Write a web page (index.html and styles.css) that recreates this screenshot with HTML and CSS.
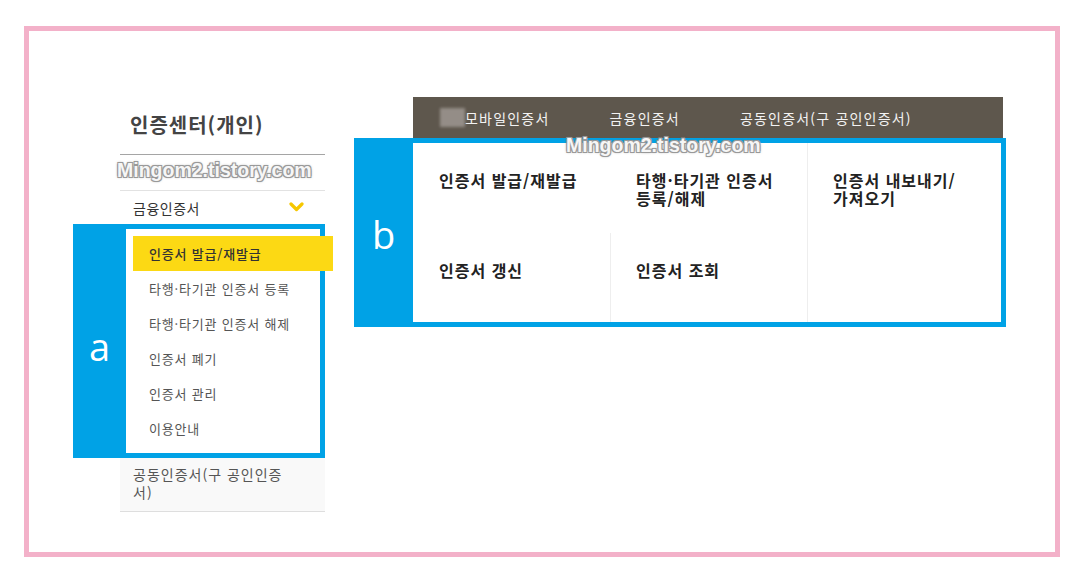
FILE: index.html
```html
<!DOCTYPE html>
<html lang="ko">

<head>
    <meta charset="UTF-8">
    <meta name="viewport" content="width=device-width, initial-scale=1.0">
    <title>인증센터(개인)</title>
    <link rel="stylesheet" href="styles.css">
</head>

<body>
    <div class="frame">
        <div class="side">
            <div class="side-title">인증센터(개인)</div>
            <div class="side-blank"></div>
            <div class="side-menu">
                <span>금융인증서</span>
                <svg class="chevron" width="15" height="10" viewBox="0 0 15 10">
                    <polyline points="2,2 7.5,7.5 13,2" fill="none" stroke="#f6c700" stroke-width="3.2" stroke-linecap="round" stroke-linejoin="round" />
                </svg>
            </div>
            <div class="annot annot-a">
                <div class="label label-a">a</div>
                <div class="sub">
                    <div class="sub-item active">인증서 발급/재발급</div>
                    <div class="sub-item">타행·타기관 인증서 등록</div>
                    <div class="sub-item">타행·타기관 인증서 해제</div>
                    <div class="sub-item">인증서 폐기</div>
                    <div class="sub-item">인증서 관리</div>
                    <div class="sub-item">이용안내</div>
                </div>
            </div>
            <div class="side-bottom">공동인증서(구 공인인증<br>서)</div>
        </div>

        <div class="main">
            <div class="topbar">
                <span class="blurred"></span>
                <span class="tab">모바일인증서</span>
                <span class="tab">금융인증서</span>
                <span class="tab">공동인증서(구 공인인증서)</span>
            </div>
            <div class="annot annot-b">
                <div class="label label-b">b</div>
                <div class="grid">
                    <div class="cell">인증서 발급/재발급</div>
                    <div class="cell">타행·타기관 인증서<br>등록/해제</div>
                    <div class="cell line">인증서 내보내기/<br>가져오기</div>
                    <div class="cell">인증서 갱신</div>
                    <div class="cell line">인증서 조회</div>
                    <div class="cell line"></div>
                </div>
            </div>
        </div>

        <!-- watermarks sit on top of the capture -->
        <span class="mark mark-side">Mingom2.tistory.com</span>
        <span class="mark mark-main">Mingom2.tistory.com</span>
    </div>
</body>

</html>
```

FILE: styles.css
```css
body {
    margin: 0;
    padding: 0;
    background: #fff;
    font-family: "Noto Sans CJK KR", "Noto Sans", sans-serif;
}

.frame {
    position: relative;
    box-sizing: border-box;
    width: 1036px;
    height: 531px;
    margin: 26px 0 0 24px;
    border: 5px solid #f3b1c9;
    display: flex;
    align-items: flex-start;
    padding-left: 91px;
}

/* left sidebar */
.side {
    width: 205px;
    padding-top: 82px;
}

.side-title {
    font-size: 20px;
    font-weight: bold;
    line-height: 24px;
    letter-spacing: 1px;
    color: #444;
    padding: 0 0 17px 10px;
    border-bottom: 1px solid #a5a5a5;
}

.side-blank {
    height: 35px;
    border-bottom: 1px solid #e2e2e2;
}

.side-menu {
    height: 33px;
    display: flex;
    justify-content: space-between;
    align-items: center;
    padding: 0 21px 0 13px;
    font-size: 14px;
    letter-spacing: 0.5px;
    color: #333;
}

.chevron {
    margin-top: -2px;
}

.annot {
    display: flex;
}

.label {
    background: #00a2e6;
    color: #fff;
    font-family: "Open Sans", sans-serif;
    font-size: 38px;
    display: flex;
    justify-content: center;
    align-items: center;
}

.annot-a {
    margin-left: -47px;
}

.label-a {
    width: 53px;
    padding-top: 10px;
}

.sub {
    width: 194px;
    background: #fff;
    border: 5px solid #00a2e6;
    border-left: none;
    padding: 7px 0;
}

.sub-item {
    box-sizing: border-box;
    width: 200px;
    height: 35px;
    line-height: 35px;
    margin-left: 7px;
    padding-left: 16px;
    font-size: 13px;
    letter-spacing: 0.8px;
    color: #555;
}

.sub-item.active {
    background: #fcd914;
    color: #333;
    font-weight: 500;
}

.side-bottom {
    background: #f9f9f9;
    padding: 7px 20px 10px 13px;
    font-size: 14px;
    line-height: 18px;
    letter-spacing: 1px;
    color: #555;
    border-bottom: 1px solid #dedede;
}

/* right panel */
.main {
    margin: 66px 0 0 29px;
}

.topbar {
    box-sizing: border-box;
    width: 590px;
    height: 41px;
    margin-left: 59px;
    padding-left: 27px;
    background: #5e574d;
    display: flex;
    align-items: center;
    font-size: 14px;
    letter-spacing: 1.2px;
    color: #f3f3f3;
}

.blurred {
    width: 25px;
    height: 19px;
    background: #948d87;
    filter: blur(1.5px);
}

.tab + .tab {
    margin-left: 60px;
}

.label-b {
    width: 59px;
    padding-top: 2px;
}

.grid {
    display: grid;
    grid-template-columns: 197px 197px 194px;
    grid-template-rows: 90px 89px;
    background: #fff;
    border: 5px solid #00a2e6;
    border-left: none;
}

.cell {
    padding: 28px 0 0 26px;
    font-size: 16px;
    font-weight: bold;
    line-height: 18px;
    letter-spacing: 1px;
    color: #222;
}

.cell.line {
    border-left: 1px solid #eeeeee;
    padding-left: 25px;
}

/* watermark */
.mark {
    position: absolute;
    font-family: "Liberation Sans", Arial, sans-serif;
    font-size: 19.5px;
    font-weight: bold;
    line-height: 22px;
    color: #f6f6f6;
    text-shadow: 1px 1px 0 #999, -1px -1px 0 #999, 1px -1px 0 #999, -1px 1px 0 #999, 0 0 3px #777;
    white-space: nowrap;
}

.mark-side {
    left: 88px;
    top: 128px;
}

.mark-main {
    left: 537px;
    top: 103px;
}
```
